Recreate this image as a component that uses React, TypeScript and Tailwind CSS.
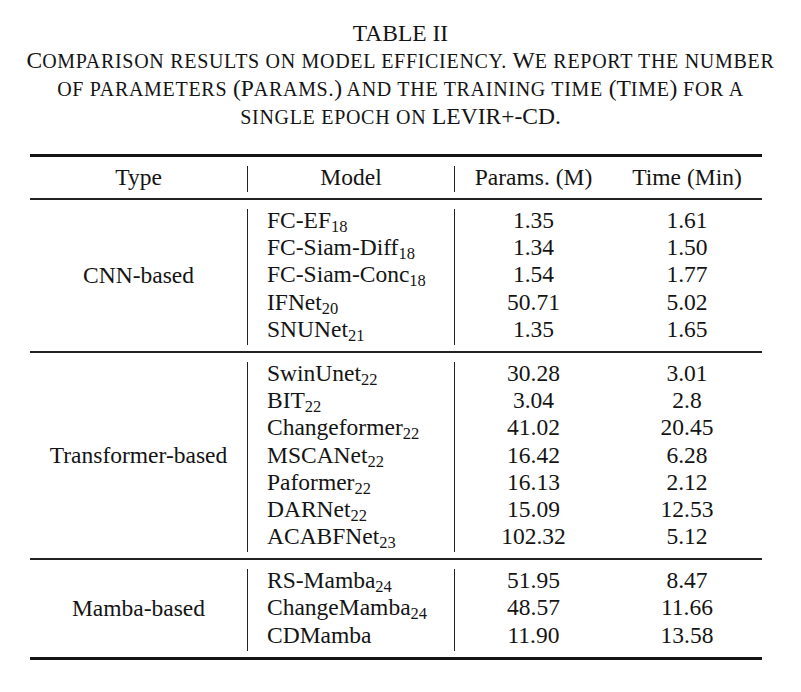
type Row = { name: string; sub?: string; params: string; time: string };

const groups: { type: string; rows: Row[] }[] = [
  {
    type: "CNN-based",
    rows: [
      { name: "FC-EF", sub: "18", params: "1.35", time: "1.61" },
      { name: "FC-Siam-Diff", sub: "18", params: "1.34", time: "1.50" },
      { name: "FC-Siam-Conc", sub: "18", params: "1.54", time: "1.77" },
      { name: "IFNet", sub: "20", params: "50.71", time: "5.02" },
      { name: "SNUNet", sub: "21", params: "1.35", time: "1.65" },
    ],
  },
  {
    type: "Transformer-based",
    rows: [
      { name: "SwinUnet", sub: "22", params: "30.28", time: "3.01" },
      { name: "BIT", sub: "22", params: "3.04", time: "2.8" },
      { name: "Changeformer", sub: "22", params: "41.02", time: "20.45" },
      { name: "MSCANet", sub: "22", params: "16.42", time: "6.28" },
      { name: "Paformer", sub: "22", params: "16.13", time: "2.12" },
      { name: "DARNet", sub: "22", params: "15.09", time: "12.53" },
      { name: "ACABFNet", sub: "23", params: "102.32", time: "5.12" },
    ],
  },
  {
    type: "Mamba-based",
    rows: [
      { name: "RS-Mamba", sub: "24", params: "51.95", time: "8.47" },
      { name: "ChangeMamba", sub: "24", params: "48.57", time: "11.66" },
      { name: "CDMamba", params: "11.90", time: "13.58" },
    ],
  },
];

// small caps the way the LaTeX caption sets them
function Sc({ children }: { children: string }) {
  return <span className="text-[20px] tracking-[0.035em]">{children}</span>;
}

function Group({ type, rows, last }: { type: string; rows: Row[]; last?: boolean }) {
  return (
    <div
      className={
        last
          ? "grid grid-cols-[217px_207px_158px_150px] pt-[9px] pb-[6px]"
          : "grid grid-cols-[217px_207px_158px_150px] pt-[9px] pb-[6px] border-b-2 border-[#222]"
      }
    >
      <div className="flex items-center justify-center pb-[3px]">{type}</div>
      <div className="border-l border-[#222] pl-[19px]">
        {rows.map((r) => (
          <div key={r.name} className="h-[27.2px] leading-[23px] whitespace-nowrap">
            {r.name}
            {r.sub && (
              <span className="text-[16.5px] align-[-4px] leading-none">{r.sub}</span>
            )}
          </div>
        ))}
      </div>
      <div className="border-l border-[#222] text-center">
        {rows.map((r) => (
          <div key={r.name} className="h-[27.2px] leading-[23px]">
            {r.params}
          </div>
        ))}
      </div>
      <div className="text-center">
        {rows.map((r) => (
          <div key={r.name} className="h-[27.2px] leading-[23px]">
            {r.time}
          </div>
        ))}
      </div>
    </div>
  );
}

export default function App() {
  return (
    <div className="min-h-screen bg-white font-['Liberation_Serif','Times_New_Roman',serif] text-[23.5px] text-[#141414]">
      <div className="pt-[20px] text-center leading-[27px]">
        <div>TABLE II</div>
        <div className="whitespace-nowrap">
          C<Sc>OMPARISON RESULTS ON MODEL EFFICIENCY. </Sc>W<Sc>E REPORT THE NUMBER</Sc>
        </div>
        <div className="whitespace-nowrap">
          <Sc>OF PARAMETERS </Sc>(P<Sc>ARAMS.</Sc>)<Sc> AND THE TRAINING TIME </Sc>(T<Sc>IME</Sc>)
          <Sc> FOR A</Sc>
        </div>
        <div className="whitespace-nowrap">
          <Sc>SINGLE EPOCH ON </Sc>LEVIR+-CD.
        </div>
      </div>

      <div className="ml-[30px] mt-[23px] w-[732px] border-t-[3px] border-b-[3px] border-[#141414]">
        <div className="grid grid-cols-[217px_207px_158px_150px] pt-[9px] pb-[6px] border-b-2 border-[#222]">
          <div className="h-[26px] leading-[22px] text-center">Type</div>
          <div className="h-[26px] leading-[22px] text-center border-l border-[#222]">Model</div>
          <div className="h-[26px] leading-[22px] text-center border-l border-[#222]">Params. (M)</div>
          <div className="h-[26px] leading-[22px] text-center">Time (Min)</div>
        </div>
        {groups.map((g, i) => (
          <Group key={g.type} type={g.type} rows={g.rows} last={i === groups.length - 1} />
        ))}
      </div>
    </div>
  );
}
